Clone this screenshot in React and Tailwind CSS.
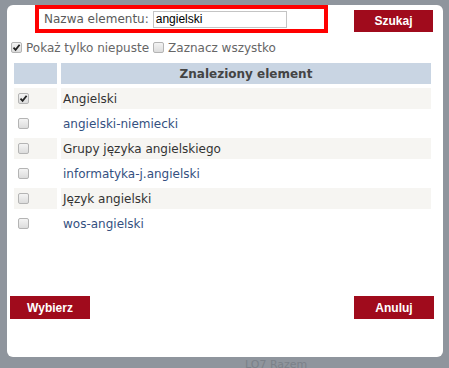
import React from "react";

const rows = [
  { label: "Angielski", link: false, checked: true, shaded: true },
  { label: "angielski-niemiecki", link: true, checked: false, shaded: false },
  { label: "Grupy języka angielskiego", link: false, checked: false, shaded: true },
  { label: "informatyka-j.angielski", link: true, checked: false, shaded: false },
  { label: "Język angielski", link: false, checked: false, shaded: true },
  { label: "wos-angielski", link: true, checked: false, shaded: false },
];

function Box({ checked }) {
  return (
    <span className="flex h-[11px] w-[11px] items-center justify-center rounded-[2px] border border-[#b4b4b4] bg-gradient-to-b from-[#f4f4f4] to-[#dcdcdc]">
      {checked && (
        <svg width="9" height="9" viewBox="0 0 9 9">
          <path d="M1.5 4.6 L3.6 6.8 L7.6 1.8" fill="none" stroke="#222" strokeWidth="1.8" />
        </svg>
      )}
    </span>
  );
}

export default function App() {
  return (
    <div
      className="relative h-[368px] w-[449px] overflow-hidden bg-[#8f959d] pl-[7px] pr-[6px] pt-[5px]"
      style={{ fontFamily: '"DejaVu Sans", Verdana, sans-serif' }}
    >
      <div className="flex h-[352px] w-[436px] flex-col rounded-[6px] bg-white">
        {/* top search row */}
        <div className="flex h-[28px] items-start">
          <div className="ml-[28px] flex h-[28px] w-[293px] items-center border-[4px] border-[#ff0000] pl-[5px]">
            <span className="text-[12px] leading-none text-[#5a5a5a]">Nazwa elementu:</span>
            <div
              className="ml-[4px] flex h-[17px] w-[134px] items-center border border-[#c4c4c4] bg-white pl-[2px] text-[12px] text-black"
              style={{ fontFamily: '"Liberation Sans", Arial, sans-serif' }}
            >
              angielski
            </div>
          </div>
          <button
            className="ml-[26px] mt-[5px] flex h-[22px] w-[79px] items-center justify-center bg-[#a00b1c] text-[12px] font-bold text-white"
            style={{ fontFamily: '"Liberation Sans", Arial, sans-serif' }}
          >
            Szukaj
          </button>
        </div>

        {/* checkbox row */}
        <div className="ml-[4px] mt-[9px] flex h-[11px] items-center text-[12px] text-[#666]">
          <Box checked />
          <span className="ml-[4px] leading-none">Pokaż tylko niepuste</span>
          <span className="ml-[4px]">
            <Box />
          </span>
          <span className="ml-[4px] leading-none">Zaznacz wszystko</span>
        </div>

        {/* table */}
        <div className="ml-[7px] mt-[10px] grid w-[417px] grid-cols-[43px_370px] gap-[4px]">
          <div className="h-[21px] bg-[#c9d5e3]" />
          <div className="flex h-[21px] items-center justify-center bg-[#c9d5e3] text-[12px] font-bold text-[#444]">
            Znaleziony element
          </div>
          {rows.map((r) => (
            <React.Fragment key={r.label}>
              <div className={`flex h-[21px] items-center pl-[4px] ${r.shaded ? "bg-[#f6f5f2]" : "bg-white"}`}>
                <Box checked={r.checked} />
              </div>
              <div
                className={`flex h-[21px] items-center pl-[2px] text-[12px] ${r.shaded ? "bg-[#f6f5f2]" : "bg-white"} ${r.link ? "text-[#34507f]" : "text-[#333]"}`}
              >
                {r.label}
              </div>
            </React.Fragment>
          ))}
        </div>

        <div className="flex-1" />

        {/* bottom buttons */}
        <div
          className="mb-[38px] flex justify-between pl-[3px] pr-[9px]"
          style={{ fontFamily: '"Liberation Sans", Arial, sans-serif' }}
        >
          <button className="flex h-[23px] w-[80px] items-center justify-center bg-[#a00b1c] text-[12px] font-bold text-white">
            Wybierz
          </button>
          <button className="flex h-[23px] w-[80px] items-center justify-center bg-[#a00b1c] text-[12px] font-bold text-white">
            Anuluj
          </button>
        </div>
      </div>
      <div className="ml-[238px] mt-[2px] text-[11px] leading-none text-[#7b8189]">LO7 Razem</div>
    </div>
  );
}
